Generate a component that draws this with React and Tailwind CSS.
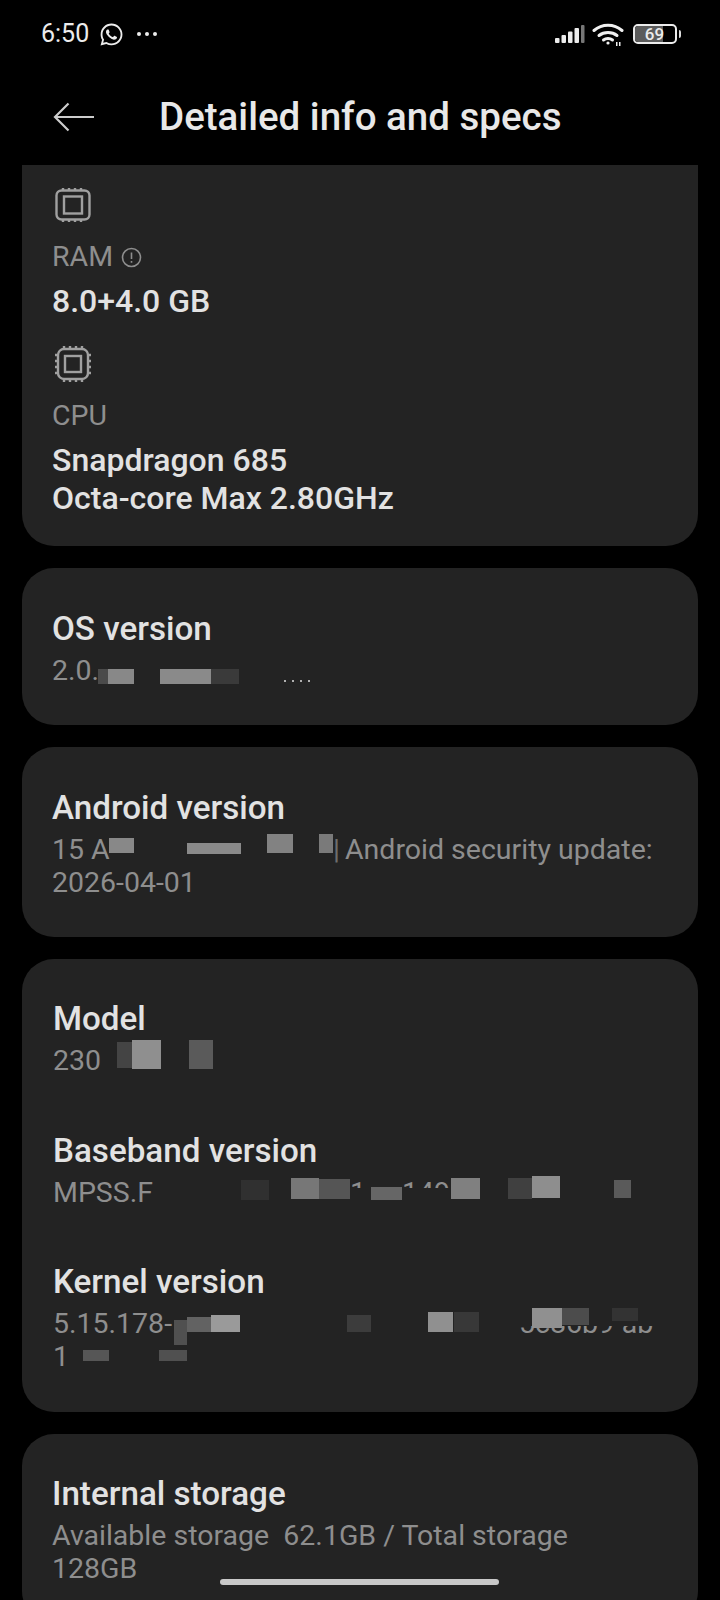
import React from "react";
import { FaWhatsapp } from "react-icons/fa";

const font = { fontFamily: "Roboto, sans-serif" };

// grey smudge left over the private values
const Smudge = ({ className }) => <span className={`shrink-0 ${className}`} />;

// text of which only the top part survived the smudging
const Cut = ({ children, className }) => <span className={`shrink-0 overflow-hidden ${className}`}>{children}</span>;

const Card = ({ children, className = "" }) => (
  <div className={`bg-[#232323] rounded-[32px] px-[30px] pb-[38px] ${className}`}>{children}</div>
);

const Title = ({ children, className = "" }) => (
  <div className={`text-[33.2px] leading-[40px] font-medium text-[#e2e2e2] ${className}`}>{children}</div>
);

const Sub = ({ children, className = "" }) => (
  <div className={`flex items-start h-[33px] text-[28.5px] leading-[33px] text-[#8e8e8e] whitespace-nowrap ${className}`}>{children}</div>
);

const RamIcon = () => (
  <svg width="36" height="36" viewBox="0 0 36 36" fill="none" stroke="#a0a0a0" strokeWidth="2.4">
    <rect x="1.5" y="3.5" width="33" height="29" rx="5" />
    <rect x="9" y="9.5" width="18" height="17" />
    <path d="M8 1v2M14 1v2M20 1v2M26 1v2M8 33v2M14 33v2M20 33v2M26 33v2" />
  </svg>
);

const CpuIcon = () => (
  <svg width="38" height="38" viewBox="0 0 38 38" fill="none" stroke="#a0a0a0" strokeWidth="2.4">
    <rect x="4" y="4" width="30" height="30" rx="6" />
    <rect x="11" y="11" width="16" height="16" />
    <path d="M10 1v3M16 1v3M22 1v3M28 1v3M10 34v3M16 34v3M22 34v3M28 34v3M1 10h3M1 16h3M1 22h3M1 28h3M34 10h3M34 16h3M34 22h3M34 28h3" />
  </svg>
);

const StatusIcons = () => (
  <div className="flex items-center gap-[9px]">
    <svg className="-mr-[2px]" width="30" height="20" viewBox="0 0 30 20" fill="#ececec">
      <rect x="0" y="14" width="4.5" height="5" rx="1" />
      <rect x="6.5" y="11" width="4.5" height="8" rx="1" />
      <rect x="13" y="7.5" width="4.5" height="11.5" rx="1" />
      <rect x="19.5" y="4" width="4.5" height="15" rx="1" />
      <rect x="26" y="1" width="3.5" height="18" rx="1" fill="#777" />
    </svg>
    <svg width="32" height="24" viewBox="0 0 32 24" fill="none" stroke="#f0f0f0" strokeWidth="3" strokeLinecap="round">
      <path d="M2 8.5C10 1.5 22 1.5 30 8.5" />
      <path d="M7 13.5C12 9.5 20 9.5 25 13.5" />
      <path d="M11.5 18C14 16 18 16 20.5 18" />
      <circle cx="16" cy="21" r="1.6" fill="#f0f0f0" stroke="none" />
      <path d="M24 22h6" strokeDasharray="1.5 1.5" strokeWidth="4" strokeLinecap="butt" />
    </svg>
    <div className="flex items-center gap-[2px]">
      <div className="grid w-[44px] h-[20px] rounded-[5px] border-2 border-[#ececec] overflow-hidden">
        <span className="col-start-1 row-start-1 w-[28px] bg-[#5c5c5c]" />
        <span className="col-start-1 row-start-1 z-10 self-center text-center text-[17px] leading-none font-medium text-[#ececec]">69</span>
      </div>
      <span className="w-[2.5px] h-[8px] bg-[#dcdcdc] rounded-r-sm" />
    </div>
  </div>
);

export default function App() {
  return (
    <div style={font} className="relative w-[720px] h-[1600px] bg-black overflow-hidden">
      {/* status bar */}
      <div className="h-[68px] pl-[41px] pr-[39px] flex items-center justify-between">
        <div className="flex items-center">
          <span className="text-[25px] font-normal text-[#ececec]">6:50</span>
          <FaWhatsapp className="ml-[10px] text-[#ececec]" size={25} />
          <span className="ml-[13px] flex gap-[4px]">
            <span className="w-[4px] h-[4px] rounded-full bg-[#ececec]" />
            <span className="w-[4px] h-[4px] rounded-full bg-[#ececec]" />
            <span className="w-[4px] h-[4px] rounded-full bg-[#ececec]" />
          </span>
        </div>
        <StatusIcons />
      </div>

      {/* header */}
      <div className="h-[97px] pl-[53px] flex items-center">
        <svg width="41" height="30" viewBox="0 0 41 30" fill="none" stroke="#cccccc" strokeWidth="2.2">
          <path d="M41 15H2M15.5 1.5L2 15L15.5 28.5" />
        </svg>
        <span className="ml-[65px] text-[38.5px] font-medium text-[#e8e8e8]">Detailed info and specs</span>
      </div>

      <div className="mx-[22px] flex flex-col gap-[22px]">
        <div className="bg-[#232323] rounded-b-[32px] px-[30px] pt-[22px] pb-[29px]">
          <div className="ml-[3px]"><RamIcon /></div>
          <div className="mt-[14px] flex items-center text-[28.5px] leading-[40px] text-[#8e8e8e]">
            RAM
            <svg className="ml-[8px]" width="21" height="21" viewBox="0 0 21 21" fill="none" stroke="#8e8e8e" strokeWidth="1.6">
              <circle cx="10.5" cy="10.5" r="9" />
              <path d="M10.5 5.5v6.5M10.5 14v1.8" />
            </svg>
          </div>
          <div className="mt-[4px] text-[32px] leading-[40px] font-medium text-[#e2e2e2]">8.0+4.0 GB</div>
          <div className="mt-[24px] ml-[2px]"><CpuIcon /></div>
          <div className="mt-[13px] text-[28.5px] leading-[40px] text-[#8e8e8e]">CPU</div>
          <div className="mt-[5px] text-[32px] leading-[38px] font-medium text-[#e2e2e2]">
            Snapdragon 685
            <br />
            Octa-core Max 2.80GHz
          </div>
        </div>

        <Card className="pt-[41px]">
          <Title>OS version</Title>
          <Sub className="mt-[5px]">
            <span className="w-[46px] shrink-0">2.0.</span>
            <Smudge className="w-[10px] h-[15px] mt-[15px] bg-[#4a4a4a]" />
            <Smudge className="w-[26px] h-[15px] mt-[15px] bg-[#888888]" />
            <Smudge className="ml-[26px] w-[51px] h-[15px] mt-[15px] bg-[#8a8a8a]" />
            <Smudge className="w-[28px] h-[15px] mt-[15px] bg-[#3a3a3a]" />
            <span className="ml-[45px] mt-[26px] h-[4px] flex gap-[6px]">
              <Smudge className="w-[2px] h-[2px] bg-[#b0b0b0]" />
              <Smudge className="w-[2px] h-[2px] bg-[#b0b0b0]" />
              <Smudge className="w-[2px] h-[2px] bg-[#b0b0b0]" />
              <Smudge className="w-[2px] h-[2px] bg-[#b0b0b0]" />
            </span>
          </Sub>
        </Card>

        <Card className="pt-[41px]">
          <Title>Android version</Title>
          <Sub className="mt-[5px]">
            <span className="w-[57px] shrink-0">15 A</span>
            <Smudge className="w-[25px] h-[15px] mt-[5px] bg-[#888888]" />
            <Cut className="ml-[35px] w-[18px] h-[10px]" />
            <Smudge className="w-[54px] h-[11px] mt-[10px] bg-[#8a8a8a]" />
            <Smudge className="ml-[26px] w-[26px] h-[19px] mt-[1px] bg-[#828282]" />
            <Smudge className="ml-[26px] w-[14px] h-[19px] mt-[1px] bg-[#7a7a7a]" />
            <span className="w-[12px] shrink-0 text-[#6e6e6e]">|</span>
            <span>Android security update:</span>
          </Sub>
          <Sub>2026-04-01</Sub>
        </Card>

        <Card className="pt-[40px] pl-[31px] pb-[39px]">
          <Title>Model</Title>
          <Sub className="mt-[5px]">
            <span className="w-[49px] shrink-0">230</span>
            <Smudge className="ml-[15px] w-[15px] h-[26px] -mt-[2px] bg-[#444444]" />
            <Smudge className="w-[29px] h-[29px] -mt-[4px] bg-[#8f8f8f]" />
            <Smudge className="ml-[28px] w-[24px] h-[29px] -mt-[4px] bg-[#5a5a5a]" />
          </Sub>
          <Title className="mt-[54px]">Baseband version</Title>
          <Sub className="mt-[5px]">
            <span className="w-[188px] shrink-0">MPSS.F</span>
            <Smudge className="w-[28px] h-[20px] mt-[4px] bg-[#303030]" />
            <Smudge className="ml-[22px] w-[28px] h-[21px] mt-[2px] bg-[#777777]" />
            <Smudge className="w-[31px] h-[20px] mt-[3px] bg-[#555555]" />
            <Cut className="w-[21px] h-[12px]">1.</Cut>
            <Smudge className="w-[31px] h-[13px] mt-[11px] bg-[#666666]" />
            <Cut className="w-[49px] h-[12px]">1495</Cut>
            <Smudge className="w-[29px] h-[21px] mt-[2px] bg-[#808080]" />
            <Smudge className="ml-[28px] w-[24px] h-[21px] mt-[2px] bg-[#404040]" />
            <Smudge className="w-[28px] h-[22px] bg-[#8e8e8e]" />
            <Smudge className="ml-[54px] w-[17px] h-[18px] mt-[4px] bg-[#5a5a5a]" />
          </Sub>
          <Title className="mt-[53px]">Kernel version</Title>
          <div className="grid mt-[5px]">
            <Sub className="col-start-1 row-start-1">
              <span className="ml-[466px] mt-[19px] h-[10px] overflow-hidden">
                <span className="block -mt-[19px]">5c86b9-ab</span>
              </span>
            </Sub>
            <Sub className="col-start-1 row-start-1 z-10">
              <span className="w-[121px] shrink-0">5.15.178-</span>
              <Smudge className="w-[13px] h-[25px] mt-[13px] bg-[#505050]" />
              <Smudge className="w-[24px] h-[15px] mt-[10px] bg-[#626262]" />
              <Smudge className="w-[29px] h-[17px] mt-[8px] bg-[#9a9a9a]" />
              <Smudge className="ml-[107px] w-[24px] h-[17px] mt-[8px] bg-[#3c3c3c]" />
              <Smudge className="ml-[57px] w-[25px] h-[20px] mt-[5px] bg-[#909090]" />
              <Smudge className="ml-[1px] w-[25px] h-[20px] mt-[5px] bg-[#383838]" />
              <Smudge className="ml-[53px] w-[30px] h-[20px] mt-[1px] bg-[#909090]" />
              <Smudge className="w-[27px] h-[17px] mt-[1px] bg-[#4c4c4c]" />
              <Smudge className="ml-[23px] w-[26px] h-[13px] mt-[1px] bg-[#333333]" />
            </Sub>
          </div>
          <Sub>
            <span className="w-[30px] shrink-0">1</span>
            <Smudge className="w-[26px] h-[11px] mt-[10px] bg-[#565656]" />
            <Smudge className="ml-[50px] w-[28px] h-[11px] mt-[10px] bg-[#505050]" />
          </Sub>
        </Card>

        <Card className="pt-[40px]">
          <Title>Internal storage</Title>
          <Sub className="mt-[5px]">Available storage&nbsp; 62.1GB / Total storage</Sub>
          <Sub>128GB</Sub>
        </Card>
      </div>

      {/* gesture bar */}
      <div className="absolute left-[220px] top-[1579px] w-[279px] h-[6px] rounded-full bg-[#c8c8c8]" />
    </div>
  );
}
